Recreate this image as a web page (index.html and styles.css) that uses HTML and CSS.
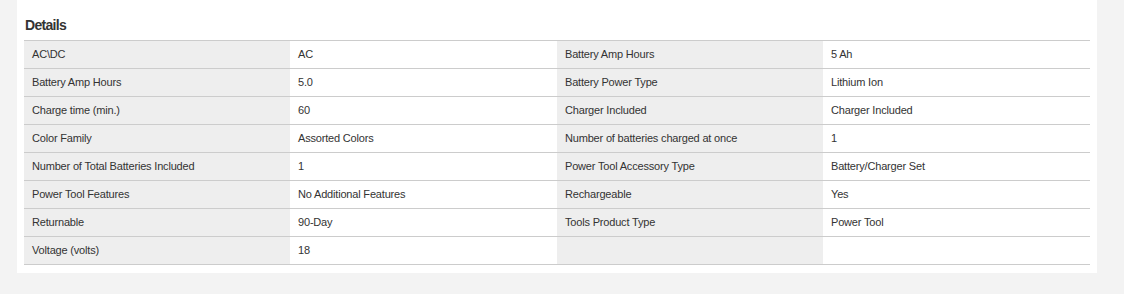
FILE: index.html
```html
<!DOCTYPE html>
<html>
<head>
<meta charset="utf-8">
<link rel="stylesheet" href="styles.css">
</head>
<body>
<section class="card">
  <h2 class="title">Details</h2>
  <div class="specs">
    <div class="row"><div class="label">AC\DC</div><div class="value">AC</div><div class="label">Battery Amp Hours</div><div class="value">5 Ah</div></div>
    <div class="row"><div class="label">Battery Amp Hours</div><div class="value">5.0</div><div class="label">Battery Power Type</div><div class="value">Lithium Ion</div></div>
    <div class="row"><div class="label">Charge time (min.)</div><div class="value">60</div><div class="label">Charger Included</div><div class="value">Charger Included</div></div>
    <div class="row"><div class="label">Color Family</div><div class="value">Assorted Colors</div><div class="label">Number of batteries charged at once</div><div class="value">1</div></div>
    <div class="row"><div class="label">Number of Total Batteries Included</div><div class="value">1</div><div class="label">Power Tool Accessory Type</div><div class="value">Battery/Charger Set</div></div>
    <div class="row"><div class="label">Power Tool Features</div><div class="value">No Additional Features</div><div class="label">Rechargeable</div><div class="value">Yes</div></div>
    <div class="row"><div class="label">Returnable</div><div class="value">90-Day</div><div class="label">Tools Product Type</div><div class="value">Power Tool</div></div>
    <div class="row"><div class="label">Voltage (volts)</div><div class="value">18</div><div class="label"></div><div class="value"></div></div>
  </div>
</section>
</body>
</html>
```
FILE: styles.css
```css
html, body {
  margin: 0;
  padding: 0;
  background: #f3f3f3;
  font-family: "Liberation Sans", Arial, sans-serif;
  color: #333;
}
.card {
  width: 1080px;
  margin-left: 17px;
  background: #fff;
  padding: 0 7px 8px 7px;
  box-sizing: border-box;
}
.title {
  margin: 0;
  padding: 17px 0 0 1px;
  height: 40px;
  box-sizing: border-box;
  font-size: 14px;
  font-weight: 700;
  letter-spacing: -0.7px;
  line-height: 16px;
  color: #333;
}
.specs {
  border-top: 1px solid #ccc;
}
.row {
  display: grid;
  grid-template-columns: 266px 267px 266px 266px;
  border-bottom: 1px solid #ccc;
  height: 28px;
  box-sizing: border-box;
}
.label, .value {
  padding: 0 8px;
  font-size: 11px;
  line-height: 27px;
  letter-spacing: -0.18px;
  white-space: nowrap;
}
.label {
  background: #eee;
}
.value {
  background: #fff;
}
```
